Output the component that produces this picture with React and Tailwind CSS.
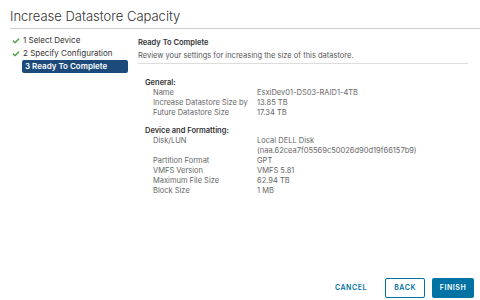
import { Check } from 'lucide-react';

const general = [
  ['Name', 'EsxiDev01-DS03-RAID1-4TB'],
  ['Increase Datastore Size by', '13.85 TB'],
  ['Future Datastore Size', '17.34 TB'],
];

const device = [
  ['Disk/LUN', 'Local DELL Disk\n(naa.62cea7f05569c50026d90d19f66157b9)'],
  ['Partition Format', 'GPT'],
  ['VMFS Version', 'VMFS 5.81'],
  ['Maximum File Size', '62.94 TB'],
  ['Block Size', '1 MB'],
];

function Section({ title, rows }) {
  return (
    <div>
      <div className="font-semibold text-[#333]">{title}</div>
      <div className="pl-2">
        {rows.map(([k, v]) => (
          <div key={k} className="flex">
            <div className="w-[104px] shrink-0 text-[#666]">{k}</div>
            <div className="text-[#666] whitespace-pre-line">{v}</div>
          </div>
        ))}
      </div>
    </div>
  );
}

export default function App() {
  const steps = [
    { label: '1 Select Device', done: true },
    { label: '2 Specify Configuration', done: true },
    { label: '3 Ready To Complete', active: true },
  ];

  return (
    <div
      className="w-[480px] h-[300px] bg-white flex flex-col overflow-hidden"
      style={{ fontFamily: 'Inter, "Open Sans", sans-serif' }}
    >
      {/* Header */}
      <div className="pl-[10px] pt-[7px]">
        <div className="text-[13px] leading-[18px] text-[#313131] font-light">Increase Datastore Capacity</div>
        <div className="h-px bg-[#ccc] mt-[3px]" />
      </div>

      <div className="flex flex-1 min-h-0">
        {/* Steps */}
        <div className="w-[130px] shrink-0 pl-[12px] pt-[5px] text-[8px] leading-[13px] text-[#333]">
          {steps.map((s) => (
            <div
              key={s.label}
              className={
                s.active
                  ? 'ml-[10px] mr-[2px] px-[3px] rounded-[2px] bg-[#1c4a7a] text-white font-semibold'
                  : 'flex items-center gap-[3px]'
              }
            >
              {s.done && <Check size={8} strokeWidth={4} className="text-[#48a23f]" />}
              {s.label}
            </div>
          ))}
        </div>

        {/* Content */}
        <div className="flex-1 flex flex-col pt-[7px] pr-[6px] pl-[8px] text-[7.5px] leading-[10px]">
          <div className="font-semibold text-[#333] leading-[13px]">Ready To Complete</div>
          <div className="text-[#565656] leading-[13px]">Review your settings for increasing the size of this datastore.</div>
          <div className="h-px bg-[#ddd] mt-[1px] mr-[6px]" />

          <div className="pl-[7px] pt-[14px] flex flex-col gap-[8px]">
            <Section title="General:" rows={general} />
            <Section title="Device and Formatting:" rows={device} />
          </div>

          <div className="mt-auto mb-[2px] flex justify-end items-center text-[7px] font-semibold tracking-[0.08em]">
            <button className="px-[4px] h-[20px] text-[#0072a3] mr-[14px]">CANCEL</button>
            <button className="w-[40px] h-[20px] border border-[#0072a3] rounded-[2px] text-[#0072a3] mr-[7px]">BACK</button>
            <button className="w-[42px] h-[20px] bg-[#0072a3] rounded-[2px] text-white">FINISH</button>
          </div>
        </div>
      </div>
    </div>
  );
}
